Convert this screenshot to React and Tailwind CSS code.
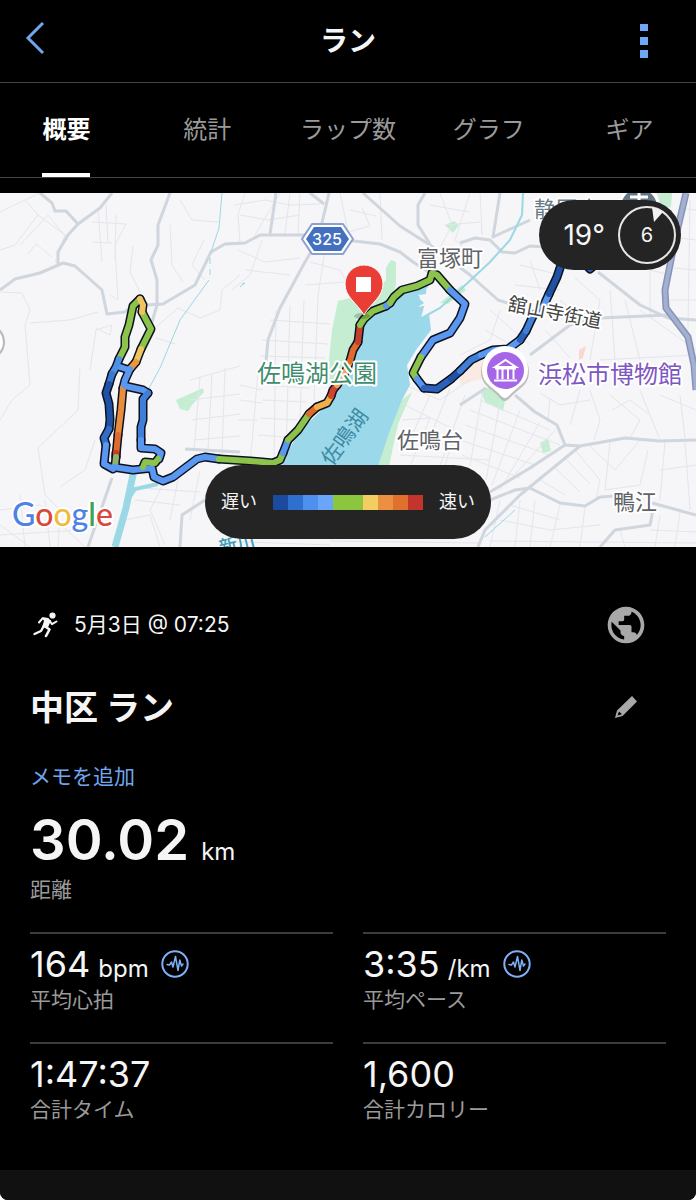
import React from "react";
import { MdPublic } from "react-icons/md";

const TABS = ["概要", "統計", "ラップ数", "グラフ", "ギア"];

const PACE_SCALE = [
  "bg-[#1c4a9e]",
  "bg-[#2f6fcd]",
  "bg-[#4f8fee]",
  "bg-[#6aa5fb]",
  "bg-[#8cc63f]",
  "bg-[#8cc63f]",
  "bg-[#f2ce62]",
  "bg-[#ea9040]",
  "bg-[#e0712c]",
  "bg-[#c2342c]",
];

const MAJOR_ROADS = [
  "M0 290L15 279L40 273L63 263L75 266L102 290L107 314L125 312L135 303",
  "M58 264L58 252L68 235L78 224L100 208L112 193",
  "M40 193L52 203L55 211L66 211L78 224",
  "M170 193L158 225L158 245L151 260L157 280L157 305L152 322",
  "M146 305L163 304L180 294L195 285L211 252L225 244L245 243L260 235L305 235",
  "M345 240L380 244L400 252L413 262L432 274",
  "M329 193L318 240L305 262L280 308L268 340L265 372",
  "M363 193L400 226L430 245L470 275L498 300L530 310",
  "M425 193L418 205L418 225L430 244",
  "M276 193L270 234",
  "M460 243L475 238L490 240L502 252L515 253L530 246L545 247",
  "M500 193L493 237L530 220",
  "M598 272L640 305L668 318L696 320",
  "M530 355L570 325L600 318L668 315",
  "M515 395L535 412L557 425L565 445L580 446L625 438L660 441L696 440",
  "M490 492L530 468L565 445",
  "M580 446L520 495L485 530L478 547",
  "M490 500L515 490L530 488L560 503L585 506L600 497L615 496",
  "M652 503L696 515",
  "M600 547L615 530L650 525L653 510",
  "M88 547L112 478",
  "M180 547L182 515L205 500",
  "M185 449L240 452",
  "M310 193L324 204",
  "M460 405L486 388",
];

const MINOR_ROADS = [
  "M0 212L25 200L38 215L15 245L0 250M25 200L40 193M38 215L65 235L55 262M20 245L48 215L68 240",
  "M28 254L36 244L52 257M0 292L22 293L30 310L25 325L30 385L12 400L0 420M30 323L70 320L98 312",
  "M92 222L126 224L115 245L118 300L110 295M98 208L102 262M106 205L108 242M116 215L115 260M92 242L112 243",
  "M133 246L130 272L140 292M90 370L96 330L112 325L110 335L96 328",
  "M80 367L78 410L38 448L45 495L70 520M60 487L85 470L95 440",
  "M170 225L172 265L183 282M204 240L192 265L205 280M180 200L192 220L218 222M245 193L238 215L240 243",
  "M156 338L175 344M155 328L178 308L200 318L220 310L222 290L240 275",
  "M165 480L150 510L165 545M180 470L170 520M125 520L150 515L160 547M200 470L190 520M135 500L180 505M140 488L200 492",
  "M190 380L240 366M194 440L240 436M192 420L240 414M190 400L240 394M200 378L194 450M212 374L208 450M225 368L222 455",
  "M0 510L40 505L85 547M0 525L30 547M20 495L25 547M45 500L50 547M60 510L58 547M0 535L80 530",
  "M235 205L265 200L290 205L320 204M240 215L268 220L300 215M255 235L280 193M290 193L285 234M300 193L298 235",
  "M238 250L265 262L300 258M245 270L290 275M232 290L250 275L262 240M270 320L330 324M262 340L328 344M260 356L325 358",
  "M276 310L274 465M290 305L286 455M304 300L300 420M318 296L314 400M258 372L250 465M240 385L262 390M240 400L262 403M238 420L258 420M262 385L310 388M262 400L306 402M260 418L298 420M258 435L286 437",
  "M310 262L340 270L350 288M305 285L345 282M325 250L318 296M340 193L348 232L370 226L362 208M380 193L382 240M350 210L376 216",
  "M440 193L452 225L440 248M470 193L455 240L480 262M430 205L470 212M445 225L480 222M480 193L482 235",
  "M405 385L440 400L470 380M402 420L430 418L410 466M405 405L455 430L445 466M430 395L410 440M450 388L425 450M465 395L440 466M400 455L490 460",
  "M483 390L470 466M500 402L486 480M520 410L492 485M540 422L500 490M555 430L510 480M470 410L560 445M465 425L550 455M460 440L535 465M480 400L550 430M462 455L520 478",
  "M490 310L530 345M485 330L520 350M460 355L490 340L500 310M530 260L540 290M520 265L560 275M515 285L560 290",
  "M575 278L600 300L590 360M610 290L615 360M560 300L595 330M545 330L570 358M625 300L640 360M640 310L696 350M650 270L650 318M600 360L696 355",
  "M640 250L660 193M645 230L675 228M650 270L670 275M690 200L688 330M696 210L678 208M696 240L680 238M696 270L674 268M696 300L670 300",
  "M590 390L600 420L594 440M540 393L560 405L590 400M580 390L570 425M610 395L640 420L630 438M640 390L660 440M612 410L630 400L650 415M660 395L696 410M680 395L685 438M550 398L548 422",
  "M575 450L600 480L596 500M590 446L615 470L640 440M540 480L565 495M555 468L580 492M565 458L590 484M535 500L530 547M560 505L550 547M585 507L580 547M500 520L550 530L600 525M510 505L560 520",
  "M610 442L605 490L640 485L648 450M665 442L660 500M685 442L690 510M660 470L696 465M620 530L625 547M660 515L655 547M680 512L675 547M650 530L696 532",
  "M490 541L696 543M500 500L490 547M520 500L515 547M330 541L480 543M220 541L330 545",
];

// Track pieces in drawing order: [colour, path]
const TRACK = [
  ["#5a97f0", "M117 366L129 370"],
  ["#8cc34a", "M140 299L133 306L129 325L125 337L125 347L119 359"],
  ["#4f8fe6", "M119 359L116 367L112 374"],
  ["#3b78d0", "M112 374L109 384"],
  ["#1f51a5", "M109 384L106 393L109 404L110 420L109 429"],
  ["#336dc6", "M109 429L104 438L106 445"],
  ["#5a97f0", "M106 445L104 464L113 469"],
  ["#8cc34a", "M142 312L151 329L141 349"],
  ["#efc460", "M140 299L143 305L142 312"],
  ["#efc460", "M141 349L136 362"],
  ["#ea963f", "M136 362L130 369"],
  ["#5a97f0", "M130 369L125 380L123 388"],
  ["#e98c3c", "M123 388L121 410L118 435"],
  ["#e0692c", "M118 435L116 456"],
  ["#c93a28", "M116 453L116 457"],
  ["#8fb36b", "M116 457L115 466"],
  ["#5a97f0", "M125 386L143 390L148 393"],
  ["#3f7fd8", "M148 393L143 399L143 420L141 427L141 440"],
  ["#5a97f0", "M141 440L141 448L155 449L161 453L159 459"],
  ["#5a97f0", "M113 467L133 470L152 468L154 477L163 481L173 477L197 459L205 457L219 459"],
  ["#8cc34a", "M158 459L155 463L145 462L143 467"],
  ["#8cc34a", "M219 459L250 461L273 463L280 460L283 453"],
  ["#5a97f0", "M283 453L288 440"],
  ["#8cc34a", "M288 440L298 430L309 414"],
  ["#e0692c", "M309 414L317 407"],
  ["#efb04a", "M317 407L327 403L331 396"],
  ["#d1432a", "M331 396L333 390L337 385"],
  ["#efa45c", "M337 385L345 373L350 361"],
  ["#e0692c", "M350 361L353 350L358 342"],
  ["#c4402c", "M358 342L360 325"],
  ["#8cc34a", "M360 325L364 319L373 311L386 306"],
  ["#5a97f0", "M386 306L390 303"],
  ["#8cc34a", "M390 303L394 297L402 290L417 286L430 280L432 273L437 275L450 290"],
  ["#5a97f0", "M450 290L465 304L460 318L450 333L433 340L421 357"],
  ["#8cc34a", "M421 357L413 373L417 379"],
  ["#5a97f0", "M417 379L424 388"],
  ["#2b61bb", "M424 388L437 389L451 379"],
  ["#1f51a5", "M451 379L460 371"],
  ["#3f7fd8", "M460 371L471 360L481 355"],
  ["#5a97f0", "M481 355L493 350L508 349L520 340"],
  ["#2b61bb", "M520 340L526 331"],
  ["#3f7fd8", "M526 331L533 316L543 307"],
  ["#5a97f0", "M543 307L549 294"],
  ["#1f51a5", "M549 294L557 277L562 262"],
  ["#2b61bb", "M585 264L590 269L596 264"],
];

const JP = "font-['Inter','Noto_Sans_CJK_JP',sans-serif]";

function MapCanvas() {
  return (
    <svg
      viewBox="0 193 696 354"
      className={`block h-auto w-full ${JP}`}
      role="img"
      aria-label="ルートマップ"
    >
      <rect x="0" y="193" width="696" height="354" fill="#f6f5f7" />

      {/* parks and built-up areas */}
      <g fill="#c4edd2">
        <path d="M338 301L375 292L386 280L386 268L391 260L396 262L396 285L390 303L364 320L352 360L338 384L329 384L329 360L332 330Z" />
        <path d="M176 400L203 388L204 392L192 405L188 411L180 409Z" />
        <path d="M445 225L454 221L459 225L453 233Z" />
        <path d="M440 303L462 285L466 290L448 304Z" />
        <path d="M402 400L412 392L398 424L389 466L375 466Z" />
        <path d="M481 393L488 387L505 401L503 411L486 403Z" />
        <path d="M540 443L548 438L551 451L543 453Z" />
        <path d="M657 193L672 193L671 207L660 210Z" />
      </g>
      <path d="M460 365L485 352L500 352L485 378L460 385Z" fill="#fbe9e4" />
      <path d="M579 350L586 346L583 358L579 360Z" fill="#f9d7d3" />

      {/* streets */}
      <g fill="none" stroke="#e3e6ec" strokeWidth="1">
        {MINOR_ROADS.map((d) => (
          <path key={d} d={d} />
        ))}
      </g>
      <g fill="none" stroke="#d0d6de" strokeWidth="3" strokeLinejoin="round">
        {MAJOR_ROADS.map((d) => (
          <path key={d} d={d} />
        ))}
      </g>
      <path
        d="M686 193L675 240L665 290L666 308L688 337L694 365L696 390"
        fill="none"
        stroke="#8593b8"
        strokeWidth="7"
      />
      <path
        d="M686 193L675 240L665 290L666 308L688 337L694 365L696 390"
        fill="none"
        stroke="#a3b0cf"
        strokeWidth="4"
      />

      {/* water */}
      <path
        d="M364 320L390 306L397 296L430 281L425 296L419 298L424 303L418 307L428 305L431 330L416 350L407 365L410 385L402 400L389 433L375 475L280 475L284 458L300 431L327 405L345 375L356 345Z"
        fill="#9bd8e9"
      />
      <path
        d="M434 282L426 289L427 294L418 295L425 303L421 318L430 314L438 308L441 290Z"
        fill="#f6f5f7"
      />
      <g fill="none" stroke="#9bd8e5">
        <path d="M115 547L126 508L134 470" strokeWidth="7" />
        <path d="M125 504L135 489L158 484" strokeWidth="4" />
        <path d="M222 193L219 228L211 252" strokeWidth="1" />
        <path d="M210 258L210 275" strokeWidth="1" strokeDasharray="6 5" />
        <path d="M209 280L180 320L160 368L148 390" strokeWidth="1" />
        <path d="M523 193L522 215L510 240L490 262L460 290L440 308L420 319" strokeWidth="2" />
        <path d="M485 537L515 510" strokeWidth="1" />
        <path d="M240 287L245 283L242 284" strokeWidth="1" />
      </g>

      {/* recorded track */}
      <g fill="none" stroke="#0c1220" strokeWidth="9" strokeLinecap="round" strokeLinejoin="round">
        {TRACK.map(([, d]) => (
          <path key={d} d={d} />
        ))}
      </g>
      <g fill="none" strokeWidth="6" strokeLinecap="round" strokeLinejoin="round">
        {TRACK.map(([c, d]) => (
          <path key={d} d={d} stroke={c} />
        ))}
      </g>

      {/* route shield */}
      <path d="M312 224L343 224L353 239L343 254L312 254L302 239Z" fill="#fff" stroke="#8ba0cd" strokeWidth="2" strokeLinejoin="round" />
      <path d="M314 227L341 227L349 239L341 251L314 251L306 239Z" fill="#4470c0" />
      <text x="327" y="245" textAnchor="middle" fontSize="16" fontWeight="500" fill="#fff">325</text>

      {/* place names */}
      <g stroke="#fff" strokeWidth="4" strokeLinejoin="round" paintOrder="stroke">
        <text x="534" y="217" fontSize="22" fill="#697a86">静岡大</text>
        <text x="417" y="266" fontSize="22" fill="#5f6368">富塚町</text>
        <text x="257" y="382" fontSize="24" fill="#3f8d6e">佐鳴湖公園</text>
        <text x="397" y="448" fontSize="22" fill="#5f6368">佐鳴台</text>
        <text x="613" y="510" fontSize="22" fill="#5f6368">鴨江</text>
        <text x="538" y="383" fontSize="24" fill="#7e57c2">浜松市博物館</text>
        <text transform="translate(507 310) rotate(11)" fontSize="19" fill="#444">舘山寺街道</text>
      </g>
      <text transform="translate(332 467) rotate(-54)" fontSize="21" fill="#3d8ba6">佐鳴湖</text>
      <text transform="translate(221 554) rotate(-14)" fontSize="18" fontWeight="500" fill="#3d9bb5">新川</text>

      {/* university marker, mostly under the weather pill */}
      <circle cx="639" cy="207" r="21" fill="#fff" />
      <circle cx="639" cy="207" r="18" fill="#637684" />
      <path d="M630 197H648M639 193V205M632 203H646" stroke="#fff" strokeWidth="3" />

      {/* museum marker */}
      <path d="M505 348a24 24 0 0 1 24 24c0 11-7 15-14 21c-4 3-7 8-10 8s-6-5-10-8c-7-6-14-10-14-21a24 24 0 0 1 24-24Z" fill="#00000038" />
      <path d="M505 346a23 23 0 0 1 23 24c0 11-7 15-14 21c-4 3-6 7-9 7s-5-4-9-7c-7-6-14-10-14-21a23 23 0 0 1 23-24Z" fill="#fff" />
      <circle cx="505.500" cy="370.500" r="18.500" fill="#a566e8" />
      <path d="M495 367L505.500 360L516 367ZM495 368.500H516M497.500 369V379M502.500 369V379M508 369V379M513.500 369V379M494 380.500H517" fill="none" stroke="#fff" strokeWidth="2" />

      {/* finish marker */}
      <ellipse cx="362" cy="316" rx="8" ry="3" fill="#00000030" />
      <path d="M364 265a19 19 0 0 1 19 19c0 13-12 19-19 31c-7-12-19-18-19-31a19 19 0 0 1 19-19Z" fill="#ea3d35" stroke="#fff" strokeWidth="1" />
      <rect x="356" y="277" width="15" height="15" fill="#fff" />

      <circle cx="-13" cy="342" r="17" fill="#fff" stroke="#b8b8b8" strokeWidth="2" />

      <text
        x="12"
        y="526"
        fontSize="32"
        fontWeight="500"
        stroke="#fff"
        strokeWidth="4"
        strokeLinejoin="round"
        paintOrder="stroke"
        className="font-['Lato',sans-serif]"
      >
        <tspan fill="#4f82e6">G</tspan>
        <tspan fill="#d9483b">o</tspan>
        <tspan fill="#eebc3c">o</tspan>
        <tspan fill="#4f82e6">g</tspan>
        <tspan fill="#3fa057">l</tspan>
        <tspan fill="#d9483b">e</tspan>
      </text>
    </svg>
  );
}

function RunnerIcon() {
  return (
    <svg viewBox="-3 0 30 26" className="h-[26px] w-[30px]" aria-hidden="true">
      <circle cx="19.500" cy="3.500" r="3.100" fill="#f5f5f5" />
      <path d="M9 5.500L14 6L18 8.500L16.500 12L14.500 16.500L9 15L11 9Z" fill="#f5f5f5" />
      <g fill="none" stroke="#f5f5f5" strokeLinecap="round" strokeLinejoin="round">
        <path d="M15 7L9.500 6.300L6 10.500" strokeWidth="2" />
        <path d="M16.500 8.500L19 12.200L23.500 9.500" strokeWidth="2" />
        <path d="M10.500 14.500L8 19L1.500 22" strokeWidth="2.400" />
        <path d="M11.500 14L16.500 17.500L13 24" strokeWidth="2.600" />
      </g>
    </svg>
  );
}

function PencilIcon() {
  return (
    <svg viewBox="0 0 24 24" className="size-6" aria-hidden="true">
      <path
        fillRule="evenodd"
        fill="#a8a8a8"
        d="M18 1L23 6.500L8.500 21L1 23L3 15.500ZM5 16.500L3.500 20.500L8 19.200Z"
      />
    </svg>
  );
}

function PulseIcon() {
  return (
    <svg viewBox="0 0 28 28" className="size-7" fill="none" stroke="#7fb0f5" aria-hidden="true">
      <circle cx="14" cy="14" r="12.700" strokeWidth="2" />
      <path
        d="M6 14.500L8.500 15L10.500 12L12 17L14.500 6.500L17 20.500L18.800 10L20.500 16L22 14"
        strokeWidth="1.500"
        strokeLinejoin="round"
        strokeLinecap="round"
      />
    </svg>
  );
}

function Metric({ value, unit, label }) {
  return (
    <div className="h-[110px] border-t-2 border-[#3c3c3c] pt-2">
      <dd className="flex h-11 items-center gap-3">
        <span className="flex items-baseline gap-2">
          <span className="text-[36px] leading-[44px]">{value}</span>
          {unit && <span className="text-2xl">{unit}</span>}
        </span>
        {unit && (
          <button type="button" aria-label={`${label}のグラフ`}>
            <PulseIcon />
          </button>
        )}
      </dd>
      <dt className="text-[21px] leading-7 text-[#9a9a9a]">{label}</dt>
    </div>
  );
}

export default function App() {
  return (
    <div className="min-h-screen bg-white">
      <div className={`flex min-h-screen flex-col overflow-hidden rounded-b-lg bg-black text-[#f5f5f5] ${JP}`}>
        <header className="flex h-[83px] items-center justify-between border-b border-[#444] px-6">
          <button type="button" aria-label="戻る" className="flex w-14 pb-1">
            <svg viewBox="0 0 22 34" className="h-[34px] w-[22px]" aria-hidden="true">
              <path d="M19 1L4 16L19 31" fill="none" stroke="#6fa6ee" strokeWidth="3" />
            </svg>
          </button>
          <h1 className="text-[28px] font-bold">ラン</h1>
          <button type="button" aria-label="メニュー" className="flex w-14 justify-center">
            <svg viewBox="0 0 8 34" className="h-[34px] w-2" aria-hidden="true">
              <path d="M0 0H8V7H0ZM0 13H8V21H0ZM0 26H8V34H0Z" fill="#6fa6f5" />
            </svg>
          </button>
        </header>

        <nav className="border-b border-[#444]">
          <div role="tablist" className="-mx-1 grid h-[94px] grid-cols-5">
            {TABS.map((tab, i) => (
              <button
                key={tab}
                type="button"
                role="tab"
                aria-selected={i === 0}
                className={
                  i === 0
                    ? "flex items-center justify-center text-2xl font-bold text-white"
                    : "flex items-center justify-center text-2xl text-[#9a9a9a]"
                }
              >
                <span className={i === 0 ? "flex h-full items-center border-y-4 border-transparent border-b-white" : ""}>
                  {tab}
                </span>
              </button>
            ))}
          </div>
        </nav>

        <section className="relative mt-[15px]">
          <MapCanvas />
          <div className="absolute top-[7px] right-[15px] flex h-[70px] items-center gap-3 rounded-full bg-[#242424] pr-1 pl-6">
            <span className="text-[28px]">19°</span>
            <span className="relative flex size-[60px] items-center justify-center text-xl">
              <svg viewBox="0 0 60 60" className="absolute inset-0" aria-hidden="true">
                <circle cx="30" cy="30" r="28" fill="none" stroke="#e6e6e6" strokeWidth="2" />
                <path d="M35 2L46 7L37 17Z" fill="#f2f2f2" />
              </svg>
              6
            </span>
          </div>
          <div className="absolute inset-x-0 bottom-2 flex justify-center">
            <div className="flex h-[74px] items-center gap-4 rounded-full bg-[#242424] px-4 text-lg">
              <span>遅い</span>
              <span className="flex">
                {PACE_SCALE.map((c, i) => (
                  <span key={i} className={`h-[15px] w-[15px] ${c}`} />
                ))}
              </span>
              <span>速い</span>
            </div>
          </div>
        </section>

        <main className="px-[30px] pt-14">
          <div className="flex h-11 items-center">
            <RunnerIcon />
            <p className="pl-[14px] text-[21px]">5月3日 @ 07:25</p>
            <button type="button" aria-label="公開設定" className="mr-[18px] ml-auto text-[#a8a8a8]">
              <MdPublic className="size-[44px]" />
            </button>
          </div>
          <div className="mt-8 flex h-[56px] items-center justify-between">
            <h2 className="text-[34px] font-bold">中区 ラン</h2>
            <button type="button" aria-label="名前を編集" className="mr-7">
              <PencilIcon />
            </button>
          </div>
          <a href="#memo" className="mt-7 block text-[21px] leading-7 text-[#6fa6ee]">
            メモを追加
          </a>
          <dl>
            <div className="pt-[13px]">
              <dd className="flex items-baseline gap-3">
                <span className="text-[56px] leading-[72px] font-semibold">30.02</span>
                <span className="text-2xl">km</span>
              </dd>
              <dt className="text-[21px] leading-7 text-[#9a9a9a]">距離</dt>
            </div>
            <div className="mt-7 grid grid-cols-2 gap-x-[30px]">
              <Metric value="164" unit="bpm" label="平均心拍" />
              <Metric value="3:35" unit="/km" label="平均ペース" />
              <Metric value="1:47:37" label="合計タイム" />
              <Metric value="1,600" label="合計カロリー" />
            </div>
          </dl>
        </main>
        <footer className="mt-[18px] min-h-[30px] grow bg-[#111]" />
      </div>
    </div>
  );
}
